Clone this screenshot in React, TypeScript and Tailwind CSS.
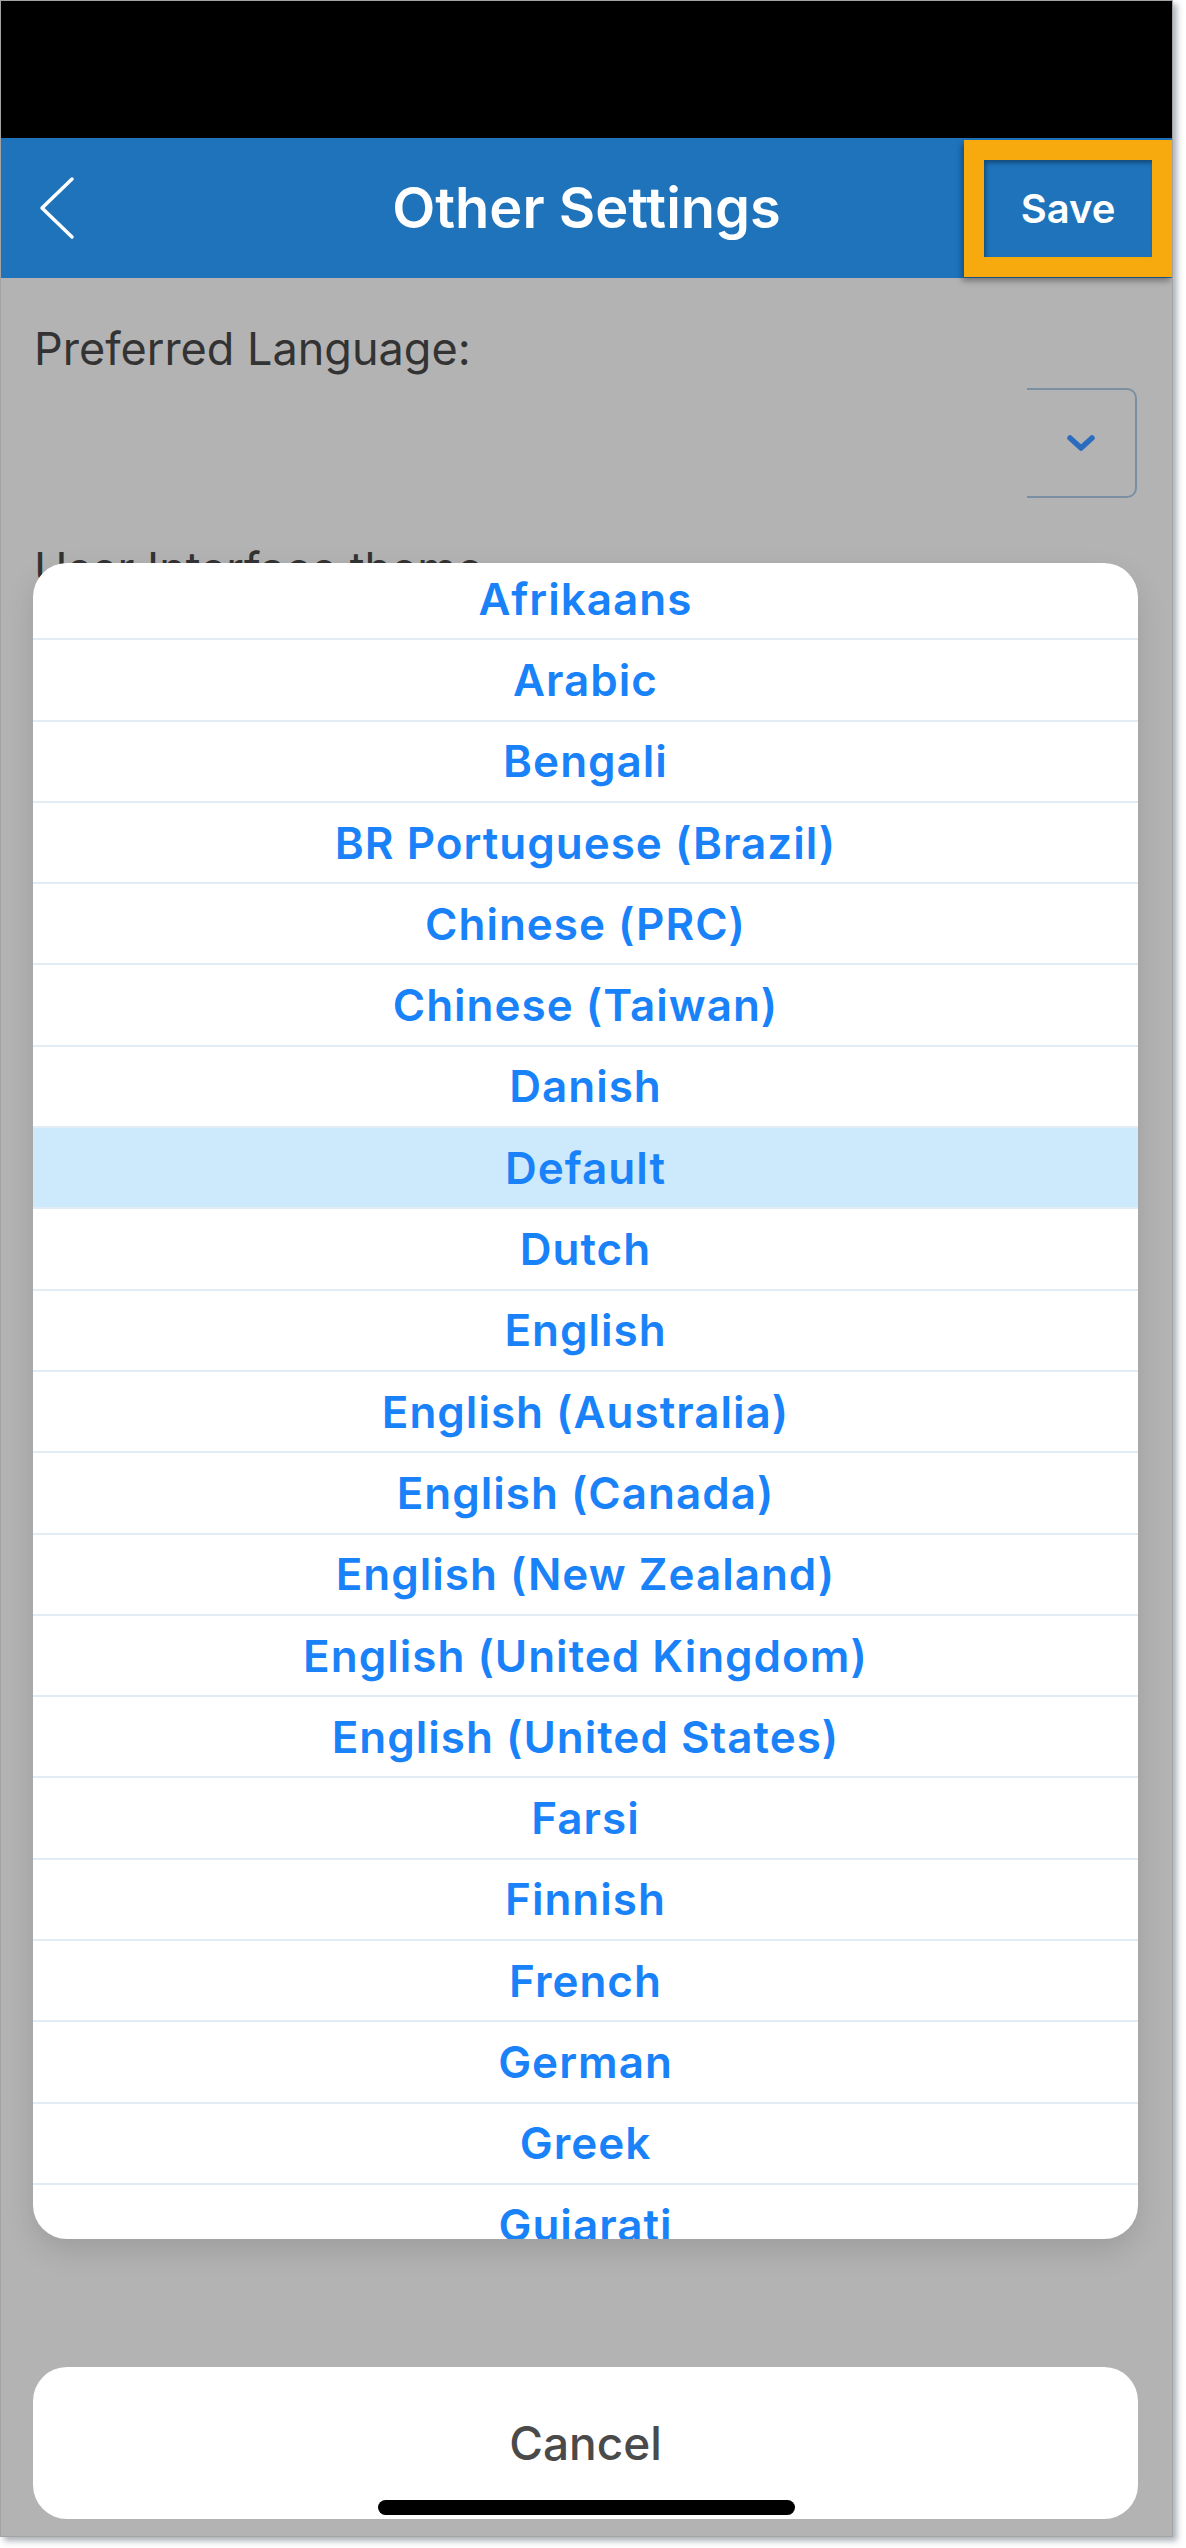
const languages = [
  'Afrikaans',
  'Arabic',
  'Bengali',
  'BR Portuguese (Brazil)',
  'Chinese (PRC)',
  'Chinese (Taiwan)',
  'Danish',
  'Default',
  'Dutch',
  'English',
  'English (Australia)',
  'English (Canada)',
  'English (New Zealand)',
  'English (United Kingdom)',
  'English (United States)',
  'Farsi',
  'Finnish',
  'French',
  'German',
  'Greek',
  'Gujarati',
]

const selected = 'Default'

export default function App() {
  return (
    <div className="w-[1186px] h-[2548px] bg-white font-['Inter',sans-serif]">
      <div className="relative w-[1173px] h-[2537px] border border-[#a3a3a3] bg-[#b3b3b3] overflow-hidden shadow-[4px_4px_6px_rgba(70,85,100,0.45)]">
        {/* status bar */}
        <div className="h-[137px] bg-black" />

        {/* header */}
        <header className="h-[140px] bg-[#1e73bb] grid grid-cols-[1fr_auto_1fr] items-center">
          <div className="flex items-center">
            <svg width="40" height="64" viewBox="0 0 40 64" className="ml-[36px]">
              <polyline points="35,3 5,32 35,61" fill="none" stroke="white" strokeWidth="3.5" strokeLinecap="round" strokeLinejoin="round" />
            </svg>
          </div>
          <h1 className="text-white text-[56px] font-semibold">Other Settings</h1>
          <div className="flex justify-end self-start pt-[2px]">
            <button className="w-[208px] h-[137px] border-[20px] border-[#f6aa0e] bg-[#1e73bb] shadow-[-2px_4px_6px_rgba(0,0,0,0.35)]">
              <div className="w-full h-full flex items-center justify-center shadow-[inset_2px_3px_4px_rgba(0,0,0,0.35)]">
                <span className="text-white text-[40px] font-semibold">Save</span>
              </div>
            </button>
          </div>
        </header>

        {/* page content (dimmed) */}
        <main className="pl-[33px] pr-[35px]">
          <p className="mt-[45px] text-[45px] leading-[52px] text-[#333333]">Preferred Language:</p>
          <div className="mt-[13px] flex justify-end">
            <div className="w-[110px] h-[110px] border-2 border-l-0 border-[#7b8fa3] rounded-r-[10px] flex items-center justify-center">
              <svg width="28" height="16" viewBox="0 0 28 16">
                <polyline points="3,3 14,13 25,3" fill="none" stroke="#2b6cbf" strokeWidth="5.5" strokeLinecap="round" strokeLinejoin="round" />
              </svg>
            </div>
          </div>
          <p className="mt-[45px] text-[45px] leading-[52px] text-[#333333]">User Interface theme</p>
        </main>

        {/* action sheet */}
        <div className="absolute left-[32px] top-[562px] w-[1105px] h-[1676px] rounded-[34px] bg-white overflow-hidden shadow-[0_12px_30px_rgba(0,0,0,0.12)]">
          <ul className="-mt-[6px]">
            {languages.map((lang) => (
              <li
                key={lang}
                className={`h-[81.3px] border-t-2 border-[#e2ecf5] flex items-center justify-center text-[44px] tracking-[1px] font-semibold text-[#1a82f8] ${
                  lang === selected ? 'bg-[#cde9fc]' : ''
                }`}
              >
                {lang}
              </li>
            ))}
          </ul>
        </div>

        <div className="absolute left-[32px] top-[2366px] w-[1105px] h-[152px] rounded-[34px] bg-white flex items-center justify-center">
          <span className="text-[46px] font-medium text-[#4a4a4a]">Cancel</span>
        </div>

        {/* home indicator */}
        <div className="absolute left-[377px] top-[2499px] w-[417px] h-[15px] rounded-full bg-black" />
      </div>
    </div>
  )
}
